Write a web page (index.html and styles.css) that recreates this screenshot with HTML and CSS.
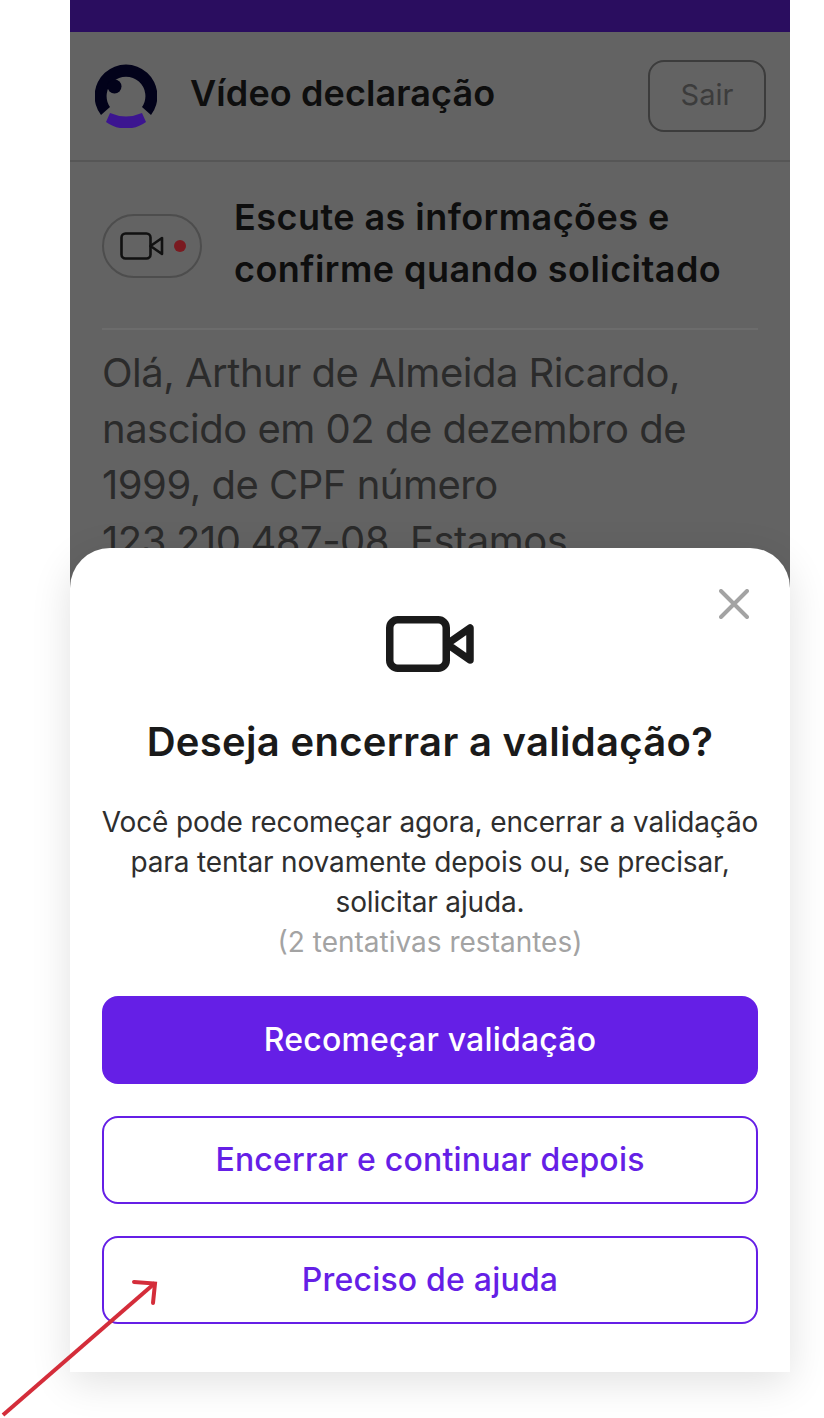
FILE: index.html
```html
<!DOCTYPE html>
<html lang="pt-BR">
<head>
    <meta charset="UTF-8">
    <title>Vídeo declaração</title>
    <link rel="stylesheet" href="styles.css">
</head>
<body>
    <div class="screen">
        <!-- tela atrás do modal -->
        <div class="topbar"></div>
        <header class="header">
            <svg class="logo" width="62" height="64" viewBox="0 0 62 64">
                <path d="M6 51 A31.4 31.4 0 1 1 56 51 L47 43 A19.4 19.4 0 1 0 15 43 Z" fill="#02021a"/>
                <circle cx="19.5" cy="22.5" r="7" fill="#02021a"/>
                <path d="M11 58 L15 49 A40 40 0 0 0 47 49 L51 58 A34 34 0 0 1 11 58 Z" fill="#3c1590"/>
            </svg>
            <h1 class="header-title">Vídeo declaração</h1>
            <div class="exit-btn">Sair</div>
        </header>
        <div class="content">
            <div class="intro">
                <div class="rec-pill">
                    <svg width="44" height="28" viewBox="0 0 44 28" fill="none" stroke="#111" stroke-width="2.6" stroke-linejoin="round">
                        <rect x="1.5" y="1.5" width="29" height="25" rx="4"/>
                        <path d="M30.5 14 L42 6 V22 Z"/>
                    </svg>
                    <span class="rec-dot"></span>
                </div>
                <h2 class="intro-title">Escute as informações e confirme quando solicitado</h2>
            </div>
            <p class="script-text">Olá, Arthur de Almeida Ricardo, nascido em 02 de dezembro de 1999, de CPF número <span class="nowrap">123.210.487-08.</span> Estamos</p>
        </div>

        <!-- modal -->
        <div class="sheet">
            <button class="close-btn" aria-label="Fechar">
                <svg width="30" height="30" viewBox="0 0 30 30" stroke="#a3a3a3" stroke-width="4" stroke-linecap="round">
                    <path d="M2 2 L28 28 M28 2 L2 28"/>
                </svg>
            </button>
            <svg class="sheet-icon" width="88" height="56" viewBox="0 0 88 56" fill="none" stroke="#1a1a1a" stroke-width="7.5" stroke-linejoin="round">
                <rect x="3.75" y="3.75" width="56.5" height="48.5" rx="8"/>
                <path d="M61 28 L84 12 V44 Z"/>
            </svg>
            <h2 class="sheet-title">Deseja encerrar a validação?</h2>
            <p class="sheet-text">Você pode recomeçar agora, encerrar a validação para tentar novamente depois ou, se precisar, solicitar ajuda.</p>
            <p class="sheet-note">(2 tentativas restantes)</p>
            <div class="actions">
                <button class="btn btn-primary">Recomeçar validação</button>
                <button class="btn btn-outline">Encerrar e continuar depois</button>
                <button class="btn btn-outline">Preciso de ajuda</button>
            </div>
        </div>
    </div>

    <!-- seta de anotação -->
    <svg class="arrow" width="164" height="146" viewBox="0 0 164 146" fill="none" stroke="#d42d3a" stroke-width="4">
        <path d="M3 141 L155 9"/>
        <path d="M134 8 L155 9.5 L153 29" stroke-linecap="round"/>
    </svg>
</body>
</html>
```

FILE: styles.css
```css
* {
    box-sizing: border-box;
}

html, body {
    height: 100%;
}

body {
    margin: 0;
    height: 1418px;
    overflow: hidden;
    background: #fff;
    position: relative;
    font-family: "Inter", "Noto Sans", sans-serif;
}

.screen {
    position: relative;
    width: 720px;
    height: 1372px;
    margin-left: 70px;
    background: #636363;
}

.topbar {
    height: 32px;
    background: #2a0d5f;
}

.header {
    display: flex;
    align-items: center;
    height: 130px;
    padding: 0 24px 0 25px;
    border-bottom: 2px solid #565656;
}

.logo {
    flex-shrink: 0;
}

.header-title {
    flex: 1;
    margin: 0 0 6px 33px;
    font-size: 36px;
    font-weight: 600;
    letter-spacing: 0.1px;
    color: #0e0e0e;
}

.exit-btn {
    width: 118px;
    height: 72px;
    display: flex;
    align-items: center;
    justify-content: center;
    padding-bottom: 4px;
    border: 2px solid #3c3c3c;
    border-radius: 16px;
    font-size: 29px;
    color: #3c3c3c;
}

.content {
    height: 386px;
    overflow: hidden;
    padding: 0 32px;
}

.intro {
    display: flex;
    align-items: center;
    gap: 32px;
    height: 168px;
    border-bottom: 2px solid #6c6c6c;
}

.rec-pill {
    flex-shrink: 0;
    width: 100px;
    height: 64px;
    margin-top: 2px;
    display: flex;
    align-items: center;
    gap: 10px;
    padding-left: 16px;
    border: 2px solid #4d4d4d;
    border-radius: 32px;
}

.rec-dot {
    width: 12px;
    height: 12px;
    border-radius: 50%;
    background: #7a1a20;
}

.intro-title {
    margin: 0 0 4px;
    font-size: 36px;
    line-height: 52px;
    font-weight: 600;
    letter-spacing: 0.45px;
    color: #0e0e0e;
}

.script-text {
    margin: 15px 0 0;
    font-size: 40px;
    line-height: 56px;
    letter-spacing: -0.5px;
    color: #2b2b2b;
}

.nowrap {
    white-space: nowrap;
}

.sheet {
    position: absolute;
    left: 0;
    right: 0;
    bottom: 0;
    height: 824px;
    display: flex;
    flex-direction: column;
    align-items: center;
    padding: 68px 32px 48px;
    background: #fff;
    border-radius: 40px 40px 0 0;
    box-shadow: 0 10px 40px rgba(0, 0, 0, 0.12);
}

.close-btn {
    position: absolute;
    top: 41px;
    right: 41px;
    padding: 0;
    border: 0;
    background: none;
    line-height: 0;
}

.sheet-icon {
    display: block;
    flex-shrink: 0;
}

.sheet-title {
    margin: 46px 0 0;
    font-size: 40px;
    line-height: 48px;
    font-weight: 600;
    letter-spacing: 0.3px;
    color: #1a1a1a;
}

.sheet-text {
    align-self: stretch;
    margin: 36px -8px 0;
    font-size: 28px;
    line-height: 40px;
    letter-spacing: -0.15px;
    text-align: center;
    color: #2e2e2e;
}

.sheet-note {
    margin: 0;
    font-size: 28px;
    line-height: 40px;
    text-align: center;
    color: #a3a3a3;
}

.actions {
    width: 100%;
    display: flex;
    flex-direction: column;
    gap: 32px;
    margin-top: 34px;
}

.btn {
    height: 88px;
    padding-bottom: 3px;
    font-family: inherit;
    font-size: 32px;
    font-weight: 500;
    letter-spacing: 0.2px;
    border-radius: 16px;
}

.btn-primary {
    background: #651fe6;
    border: 0;
    color: #fff;
}

.btn-outline {
    background: #fff;
    border: 2px solid #651fe6;
    color: #651fe6;
}

.arrow {
    position: absolute;
    left: 0;
    top: 1274px;
}
```
